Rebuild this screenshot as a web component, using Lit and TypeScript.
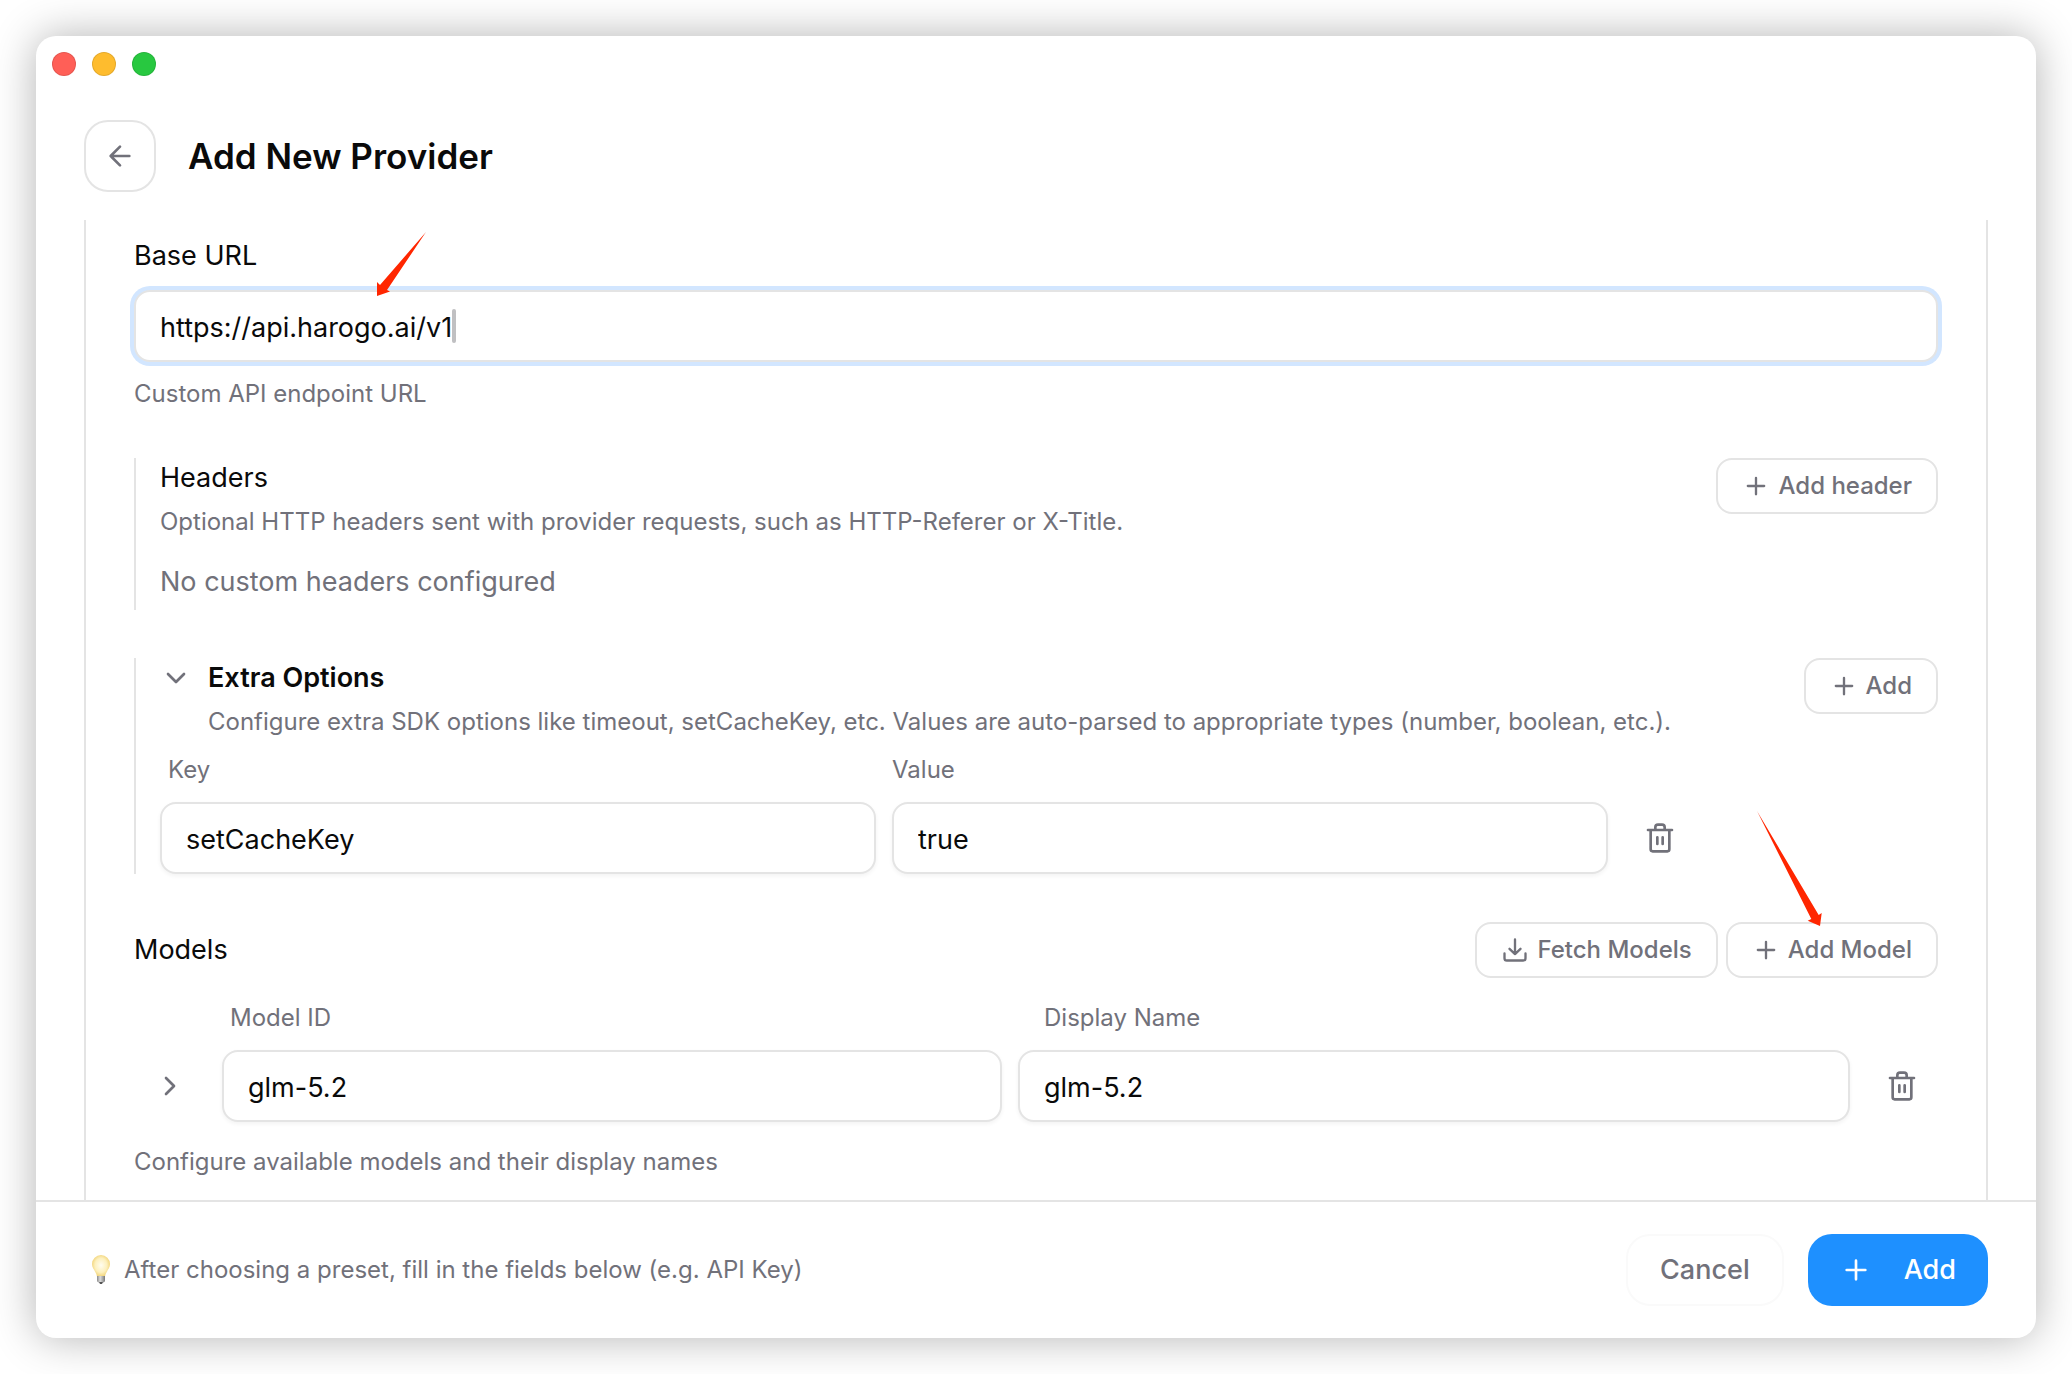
import { LitElement, html, css, svg } from "lit";
import { customElement, state } from "lit/decorators.js";

const icon = (size: "icon-md" | "icon-lg", body: unknown) => html`
  <svg class=${size} viewBox="0 0 24 24" aria-hidden="true">${body}</svg>
`;
const plus = svg`<path d="M5 12h14M12 5v14"/>`;
const arrowLeft = svg`<path d="M12 19l-7-7 7-7M19 12H5"/>`;
const chevronDown = svg`<path d="M6 9l6 6 6-6"/>`;
const chevronRight = svg`<path d="M9 6l6 6-6 6"/>`;
const download = svg`<path d="M3 15v4a2 2 0 0 0 2 2h14a2 2 0 0 0 2-2v-4M12 3v12.500M7.300 11l4.700 4.500L16.700 11"/>`;
const trash = svg`<path d="M3 6h18M5 6v14.500a1.500 1.500 0 0 0 1.500 1.500h11a1.500 1.500 0 0 0 1.500-1.500V6M8.500 6V4a2 2 0 0 1 2-2h3a2 2 0 0 1 2 2v2M10 11.500v5M14 11.500v5"/>`;

@customElement("app-root")
export class AppRoot extends LitElement {
  @state() private optionsOpen = true;

  static styles = css`
    :host {
      display: block;
      min-height: 100vh;
      box-sizing: border-box;
      padding: 36px;
      background: #ffffff;
      color: #0a0a0a;
      font-family: Inter, "Liberation Sans", sans-serif;
      font-size: 27px;
      line-height: 40px;
    }
    * {
      box-sizing: border-box;
    }
    h1, h2, p {
      margin: 0;
      font-weight: 400;
    }
    h2 {
      font-size: 27px;
      line-height: 40px;
    }
    svg {
      flex: none;
      display: block;
      fill: none;
      stroke: currentColor;
      stroke-width: 2;
      stroke-linecap: round;
      stroke-linejoin: round;
    }
    .icon-md { width: 28px; height: 28px; }
    .icon-lg { width: 32px; height: 32px; }
    .window {
      display: flex;
      flex-direction: column;
      min-height: calc(100vh - 72px);
      border-radius: 20px;
      background: #ffffff;
      box-shadow: 0 0 44px rgba(0, 0, 0, 0.3);
    }
    .titlebar {
      display: flex;
      gap: 16px;
      padding: 16px;
    }
    .light {
      width: 24px;
      height: 24px;
      border: 1px solid rgba(0, 0, 0, 0.1);
      border-radius: 50%;
    }
    .red { background: #ff5f57; }
    .yellow { background: #febc2e; }
    .green { background: #28c840; }
    .page-head {
      display: flex;
      align-items: center;
      gap: 32px;
      padding: 28px 48px;
    }
    h1 {
      font-size: 35px;
      line-height: 44px;
      font-weight: 600;
    }
    button {
      display: inline-flex;
      align-items: center;
      justify-content: center;
      gap: 8px;
      margin: 0;
      padding: 0 24px;
      border: 2px solid #e4e4e4;
      border-radius: 16px;
      background: #ffffff;
      color: #71717a;
      font: inherit;
      font-weight: 500;
      white-space: nowrap;
    }
    .small {
      height: 56px;
      font-size: 24px;
    }
    .square {
      width: 72px;
      height: 72px;
      padding: 0;
    }
    .back { border-radius: 24px; }
    .ghost { border-color: transparent; }
    .card {
      flex: 1;
      display: flex;
      flex-direction: column;
      gap: 48px;
      margin: 0 48px;
      padding: 16px 48px 22px;
      border: solid #e4e4e4;
      border-width: 0 2px;
    }
    .field {
      display: flex;
      flex-direction: column;
    }
    .field label { margin-bottom: 14px; }
    .hint {
      color: #71717a;
      font-size: 24px;
      line-height: 32px;
    }
    .field .hint { margin-top: 16px; }
    input {
      display: block;
      width: 100%;
      min-width: 0;
      height: 72px;
      padding: 2px 24px 0;
      border: 2px solid #e4e4e4;
      border-radius: 16px;
      outline: none;
      background: #ffffff;
      box-shadow: 0 2px 4px rgba(0, 0, 0, 0.05);
      color: inherit;
      font: inherit;
    }
    .focus-box {
      position: relative;
    }
    .focus-box input {
      box-shadow: 0 0 0 4px #d2e6ff;
    }
    .pointer {
      position: absolute;
      fill: #ff2600;
      stroke: none;
      pointer-events: none;
    }
    .pointer-url {
      left: 242px;
      top: -58px;
      width: 50px;
      height: 64px;
    }
    .pointer-model {
      right: 116px;
      top: -111px;
      width: 66px;
      height: 116px;
    }
    .caret {
      position: absolute;
      left: 318px;
      top: 19px;
      width: 4px;
      height: 34px;
      border-radius: 2px;
      background: #c0c0c2;
    }
    .group {
      padding-left: 24px;
      border-left: 2px solid #e4e4e4;
    }
    .group-head {
      display: flex;
      align-items: flex-start;
      justify-content: space-between;
      gap: 24px;
    }
    .group-text .hint { margin-top: 8px; }
    .empty {
      color: #71717a;
      margin-top: 24px;
      padding-bottom: 8px;
    }
    .toggle {
      display: flex;
      gap: 16px;
      padding: 0;
      border: 0;
      border-radius: 0;
      color: #0a0a0a;
    }
    .toggle svg { color: #71717a; }
    .toggle-title { font-weight: 600; }
    .indent { padding-left: 48px; }
    .option-grid {
      display: grid;
      grid-template-columns: minmax(0, 1fr) minmax(0, 1fr) 72px;
      align-items: center;
      gap: 16px;
      max-width: 1536px;
      margin-top: 16px;
    }
    .grid-label {
      color: #71717a;
      font-size: 24px;
      line-height: 32px;
    }
    .inset { padding-left: 8px; }
    .inset-wide { padding-left: 26px; }
    .actions {
      position: relative;
      display: flex;
      gap: 8px;
    }
    .models-head {
      display: flex;
      align-items: center;
      justify-content: space-between;
    }
    .model-grid {
      display: grid;
      grid-template-columns: 72px minmax(0, 15fr) minmax(0, 16fr) 72px;
      align-items: center;
      gap: 16px;
      margin-top: 24px;
    }
    .col-2 { grid-column: 2; }
    .col-3 { grid-column: 3 / 5; }
    .models .hint { margin-top: 24px; }
    .footer {
      display: flex;
      align-items: center;
      justify-content: space-between;
      padding: 32px 48px;
      border-top: 2px solid #e4e4e4;
    }
    .tip {
      display: flex;
      align-items: center;
      gap: 8px;
    }
    .bulb {
      width: 32px;
      height: 32px;
      stroke: none;
    }
    .footer-actions {
      display: flex;
      gap: 24px;
    }
    .large {
      height: 72px;
      padding: 0 32px;
      border-radius: 24px;
    }
    .cancel { border-color: #fafafa; }
    .primary {
      gap: 32px;
      border: 0;
      background: #1e90ff;
      color: #ffffff;
    }
  `;

  render() {
    return html`
      <main class="window">
        <div class="titlebar">
          <span class="light red"></span>
          <span class="light yellow"></span>
          <span class="light green"></span>
        </div>
        <header class="page-head">
          <button class="square back" aria-label="Back">${icon("icon-lg", arrowLeft)}</button>
          <h1>Add New Provider</h1>
        </header>
        <div class="card">
          <div class="field">
            <label for="base-url">Base URL</label>
            <div class="focus-box">
              <input id="base-url" type="text" value="https://api.harogo.ai/v1" />
              <span class="caret"></span>
              <svg class="pointer pointer-url" viewBox="0 0 50 64" aria-hidden="true">
                <path d="M50 0L11 58L14 59.500L1 64V50L4 53Z" />
              </svg>
            </div>
            <p class="hint">Custom API endpoint URL</p>
          </div>
          <section class="group">
            <div class="group-head">
              <div class="group-text">
                <h2>Headers</h2>
                <p class="hint">Optional HTTP headers sent with provider requests, such as HTTP-Referer or X-Title.</p>
              </div>
              <button class="small">${icon("icon-md", plus)}Add header</button>
            </div>
            <p class="empty">No custom headers configured</p>
          </section>
          <section class="group">
            <div class="group-head">
              <div class="group-text">
                <button class="toggle" aria-expanded=${this.optionsOpen}
                  @click=${() => (this.optionsOpen = !this.optionsOpen)}>
                  ${icon("icon-lg", this.optionsOpen ? chevronDown : chevronRight)}
                  <span class="toggle-title">Extra Options</span>
                </button>
                <p class="hint indent">Configure extra SDK options like timeout, setCacheKey, etc. Values are auto-parsed to appropriate types (number, boolean, etc.).</p>
              </div>
              <button class="small">${icon("icon-md", plus)}Add</button>
            </div>
            ${this.optionsOpen ? html`
              <div class="option-grid">
                <label class="grid-label inset" for="opt-key">Key</label>
                <label class="grid-label" for="opt-value">Value</label>
                <span></span>
                <input id="opt-key" type="text" value="setCacheKey" />
                <input id="opt-value" type="text" value="true" />
                <button class="square ghost" aria-label="Delete option">${icon("icon-lg", trash)}</button>
              </div>` : null}
          </section>
          <section class="models">
            <div class="models-head">
              <h2>Models</h2>
              <div class="actions">
                <button class="small">${icon("icon-md", download)}Fetch Models</button>
                <button class="small">${icon("icon-md", plus)}Add Model</button>
                <svg class="pointer pointer-model" viewBox="0 0 66 116" aria-hidden="true">
                  <path d="M1 0L62.700 104L65.700 102L64 115L51.700 109.700L55.300 108Z" />
                </svg>
              </div>
            </div>
            <div class="model-grid">
              <label class="grid-label inset col-2" for="model-id">Model ID</label>
              <label class="grid-label inset-wide col-3" for="model-name">Display Name</label>
              <button class="square ghost" aria-label="Expand model">${icon("icon-lg", chevronRight)}</button>
              <input id="model-id" type="text" value="glm-5.2" />
              <input id="model-name" type="text" value="glm-5.2" />
              <button class="square ghost" aria-label="Delete model">${icon("icon-lg", trash)}</button>
            </div>
            <p class="hint">Configure available models and their display names</p>
          </section>
        </div>
        <footer class="footer">
          <div class="tip">
            <svg class="bulb" viewBox="0 0 32 32" aria-hidden="true">
              <defs>
                <radialGradient id="glow" cx="50%" cy="48%" r="55%">
                  <stop offset="0" stop-color="#fffdf0" />
                  <stop offset="0.600" stop-color="#fdf0bd" />
                  <stop offset="1" stop-color="#f0d070" />
                </radialGradient>
                <linearGradient id="metal">
                  <stop offset="0" stop-color="#8a8a8a" />
                  <stop offset="0.400" stop-color="#dcdcdc" />
                  <stop offset="1" stop-color="#777777" />
                </linearGradient>
              </defs>
              <path fill="url(#glow)" d="M17 1a9 9 0 0 0-9 9c0 5 4 7 5 12.500h8c1-5.500 5-7.500 5-12.500a9 9 0 0 0-9-9z" />
              <path fill="url(#metal)" d="M13 22h8v4.500a2 2 0 0 1-1.500 2h-5a2 2 0 0 1-1.500-2z" />
              <path fill="#555555" d="M15 28h4l-1 2h-2z" />
            </svg>
            <p class="hint">After choosing a preset, fill in the fields below (e.g. API Key)</p>
          </div>
          <div class="footer-actions">
            <button class="large cancel">Cancel</button>
            <button class="large primary">${icon("icon-lg", plus)}Add</button>
          </div>
        </footer>
      </main>
    `;
  }
}
